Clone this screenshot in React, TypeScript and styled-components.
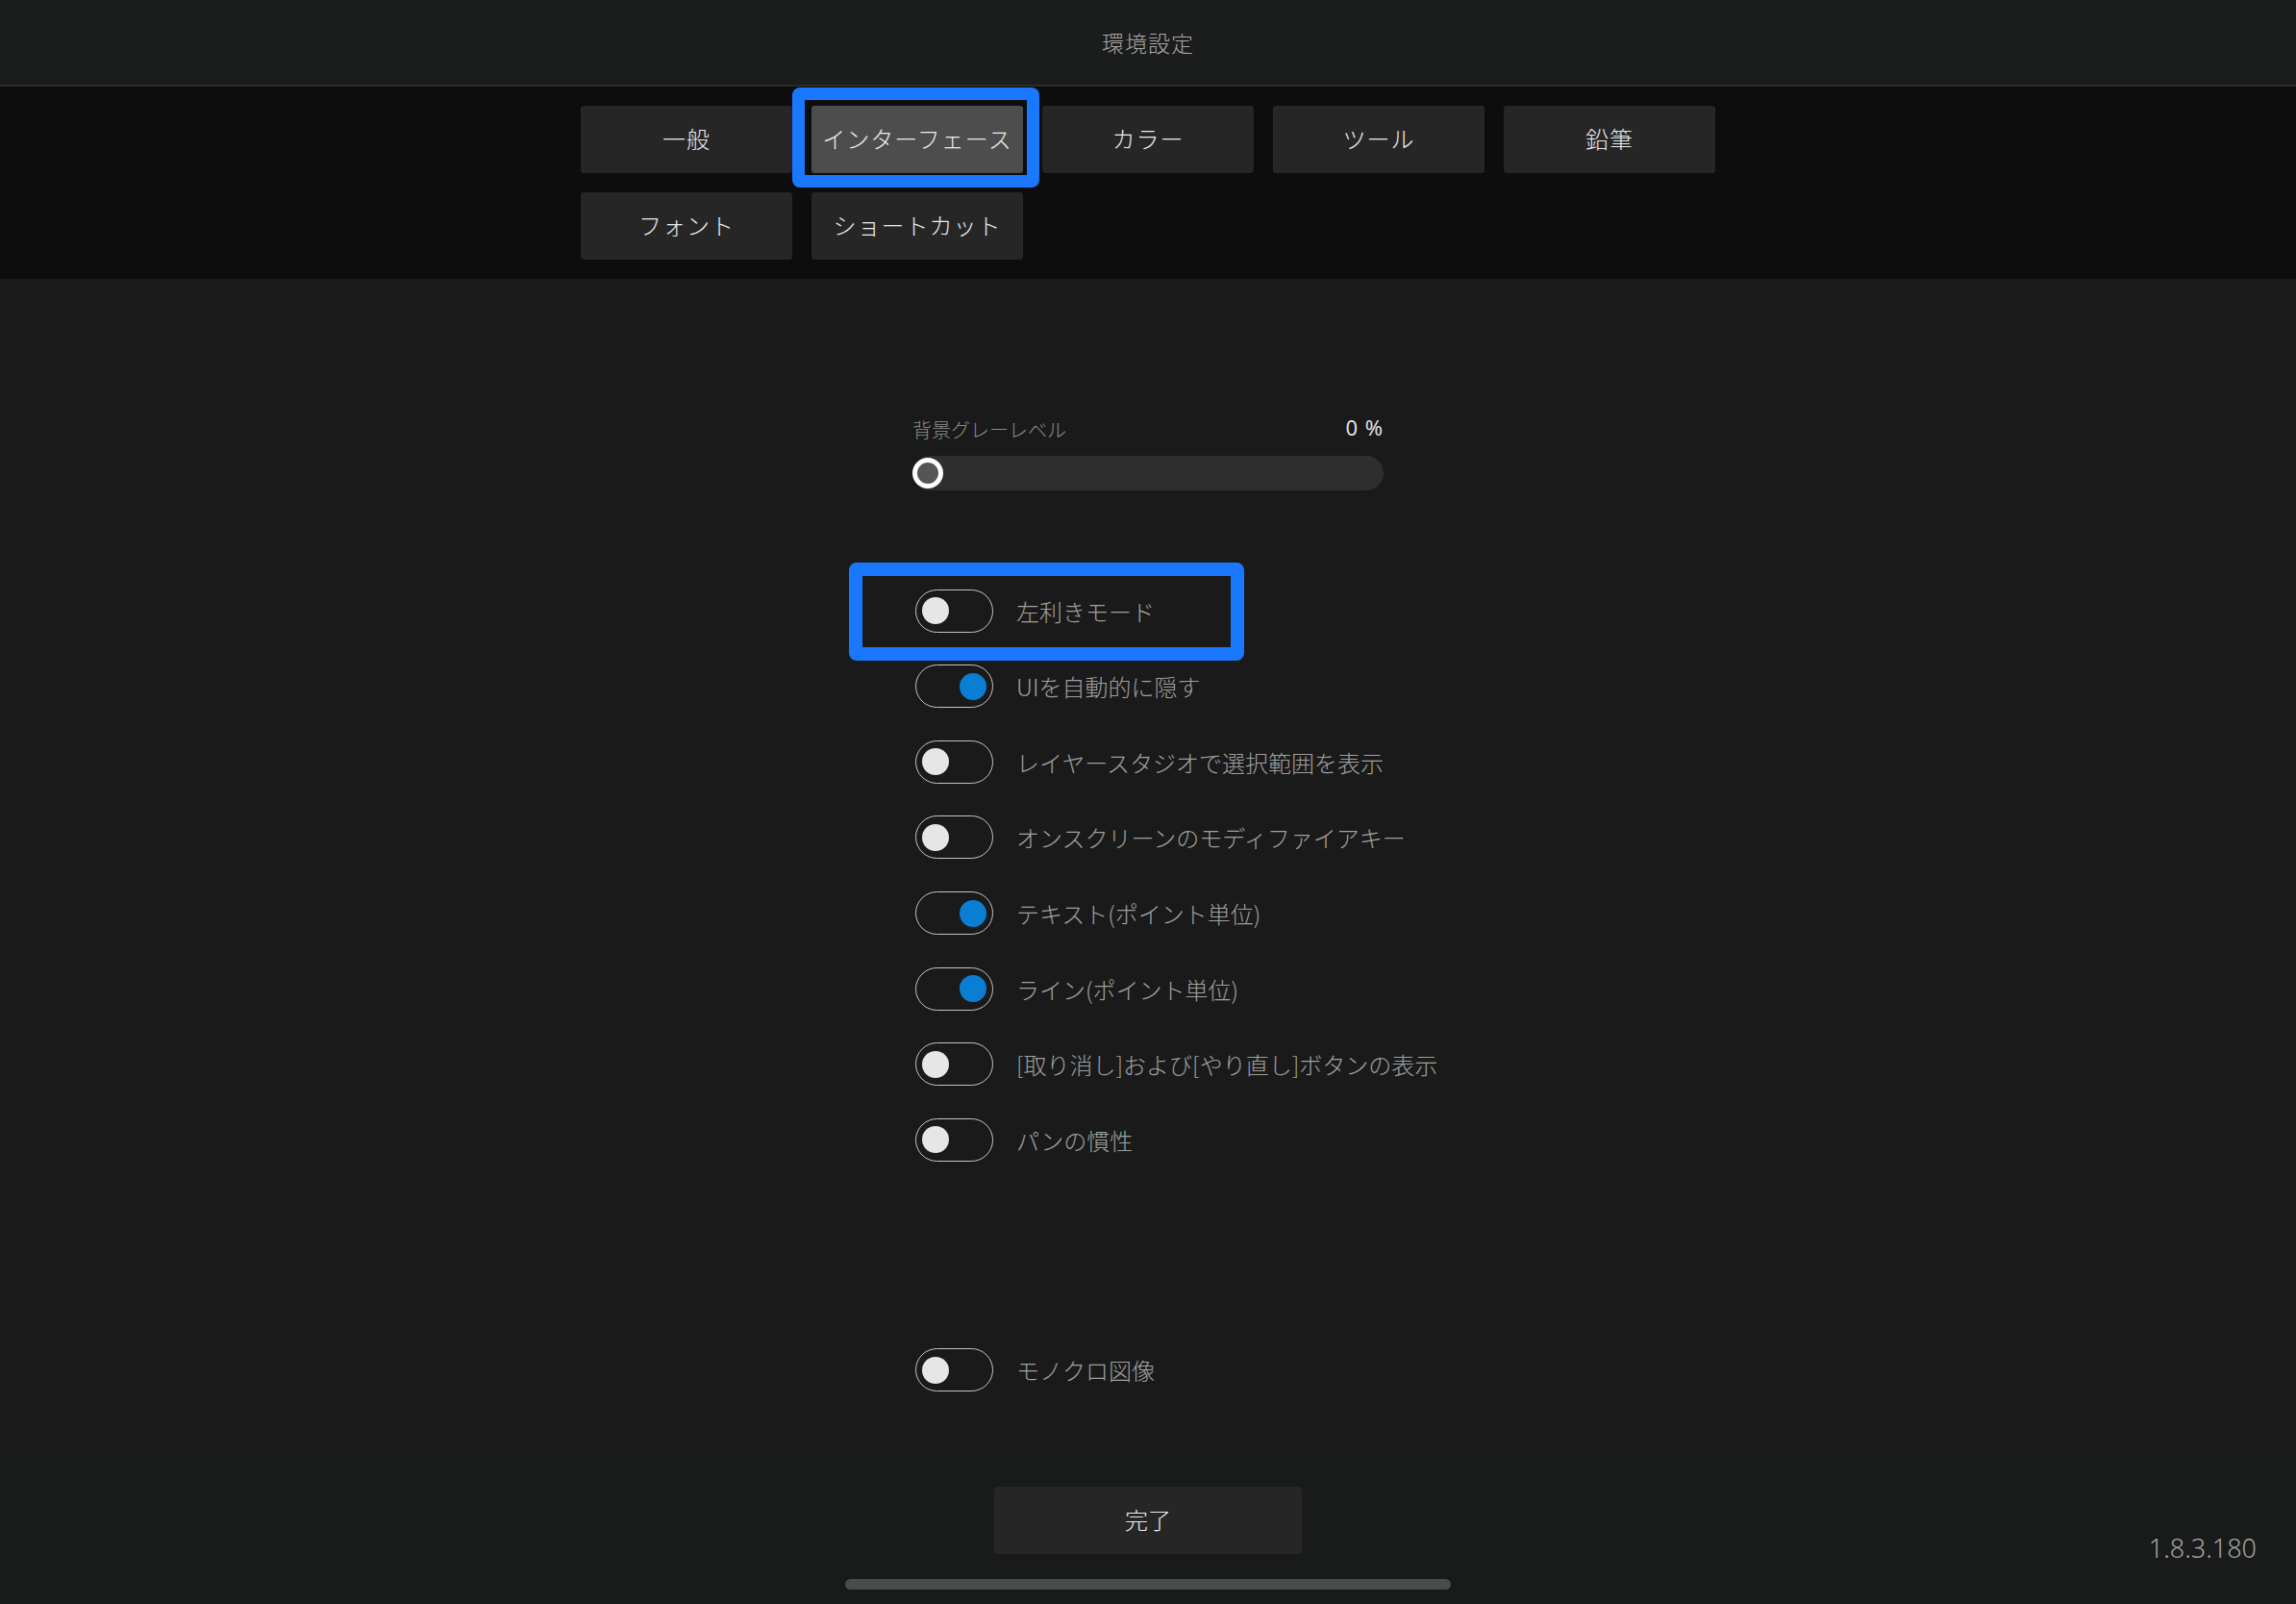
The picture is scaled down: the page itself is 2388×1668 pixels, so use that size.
import React from "react";
import styled, { createGlobalStyle } from "styled-components";

const GlobalStyle = createGlobalStyle`
  html, body {
    margin: 0;
    padding: 0;
    background: #1a1a1a;
  }
  body {
    width: 2388px;
    height: 1668px;
    overflow: hidden;
    font-family: "Noto Sans CJK JP", "Noto Sans", sans-serif;
  }
`;

const Page = styled.div`
  display: flex;
  flex-direction: column;
  width: 2388px;
  height: 1668px;
  background: #1a1a1a;
`;

const Header = styled.header`
  height: 88px;
  display: flex;
  align-items: center;
  justify-content: center;
  background: #1b1c1c;
  border-bottom: 2px solid #2c2d2d;
`;

const Title = styled.h1`
  margin: 0;
  font-size: 23px;
  font-weight: 300;
  line-height: 1;
  color: #a8a8a8;
  letter-spacing: 1px;
`;

const TabBar = styled.nav`
  background: #0d0d0d;
  padding: 20px 0;
`;

const TabGrid = styled.div`
  display: grid;
  grid-template-columns: repeat(5, 220px);
  grid-auto-rows: 70px;
  gap: 20px;
  width: 1180px;
  margin: 0 auto;
`;

const Tab = styled.div<{ $active?: boolean }>`
  position: relative;
  display: flex;
  align-items: center;
  justify-content: center;
  padding-bottom: 4px;
  box-sizing: border-box;
  border-radius: 3px;
  background: ${(p) => (p.$active ? "#4d4d4d" : "#262626")};
  color: #ececec;
  font-size: 24px;
  font-weight: 300;
  letter-spacing: 1px;
`;

// blue annotation frame drawn over a selected item
const TabMark = styled.div`
  position: absolute;
  top: -19px;
  left: -20px;
  right: -17px;
  bottom: -15px;
  border: 13px solid #1a78ff;
  border-radius: 8px;
  pointer-events: none;
`;

const Main = styled.main`
  flex: 1;
  padding-top: 145px;
`;

const Column = styled.div`
  width: 490px;
  margin: 0 auto;
`;

const SliderHead = styled.div`
  display: flex;
  justify-content: space-between;
  align-items: flex-start;
  height: 24px;
`;

const SliderLabel = styled.span`
  font-size: 20px;
  font-weight: 300;
  line-height: 24px;
  color: #8c8c8c;
`;

const SliderValue = styled.span`
  font-family: "Noto Sans", sans-serif;
  font-size: 22px;
  line-height: 18px;
  color: #e2e2e2;
  letter-spacing: 1px;
`;

const Track = styled.div`
  display: flex;
  align-items: center;
  height: 36px;
  margin-top: 15px;
  border-radius: 18px;
  background: #2e2e2e;
`;

const Thumb = styled.div`
  box-sizing: border-box;
  width: 32px;
  height: 32px;
  border-radius: 50%;
  border: 5px solid #ffffff;
  background: #555555;
`;

const ToggleList = styled.div`
  display: flex;
  flex-direction: column;
  margin-top: 86px;
`;

const Row = styled.div<{ $gap?: number }>`
  position: relative;
  display: flex;
  align-items: center;
  height: 78.57px;
  margin-top: ${(p) => p.$gap ?? 0}px;
`;

const RowMark = styled.div`
  position: absolute;
  left: -66px;
  top: -11px;
  width: 411px;
  height: 102px;
  box-sizing: border-box;
  border: 14px solid #1a78ff;
  border-radius: 8px;
  pointer-events: none;
`;

const Switch = styled.div<{ $on?: boolean }>`
  box-sizing: border-box;
  flex-shrink: 0;
  display: flex;
  align-items: center;
  justify-content: ${(p) => (p.$on ? "flex-end" : "flex-start")};
  width: 81px;
  height: 45px;
  margin-left: 3px;
  padding: 0 6px;
  border: 1.5px solid #c4c4c4;
  border-radius: 23px;
`;

const Knob = styled.div<{ $on?: boolean }>`
  flex-shrink: 0;
  width: 28px;
  height: 28px;
  border-radius: 50%;
  background: ${(p) => (p.$on ? "#0a7ed2" : "#e6e6e6")};
`;

const Label = styled.span`
  margin-left: 24px;
  font-size: 24px;
  font-weight: 300;
  color: #a0a0a0;
  white-space: nowrap;
`;

const Bottom = styled.footer`
  display: grid;
  grid-template-columns: 1fr 630px 1fr;
  grid-template-rows: 70px 11px;
  row-gap: 26px;
  height: 168px;
  box-sizing: border-box;
  padding-top: 46px;
  background: #191a1a;
`;

const DoneButton = styled.button`
  grid-column: 2;
  grid-row: 1;
  justify-self: center;
  width: 320px;
  height: 70px;
  padding: 0 0 4px;
  border: none;
  border-radius: 4px;
  background: #262626;
  color: #ededed;
  font-family: "Noto Sans CJK JP", sans-serif;
  font-size: 24px;
  font-weight: 300;
`;

const HomeBar = styled.div`
  grid-column: 2;
  grid-row: 2;
  border-radius: 6px;
  background: #4a4c4b;
`;

const Version = styled.div`
  grid-column: 3;
  grid-row: 1 / span 2;
  justify-self: end;
  align-self: start;
  margin-top: 47px;
  margin-right: 41px;
  font-family: "Noto Sans", sans-serif;
  font-size: 27px;
  font-weight: 300;
  line-height: 34px;
  color: #a2a2a2;
`;

const tabs = [
  "一般",
  "インターフェース",
  "カラー",
  "ツール",
  "鉛筆",
  "フォント",
  "ショートカット",
];

const toggles: { label: string; on: boolean; marked?: boolean }[] = [
  { label: "左利きモード", on: false, marked: true },
  { label: "UIを自動的に隠す", on: true },
  { label: "レイヤースタジオで選択範囲を表示", on: false },
  { label: "オンスクリーンのモディファイアキー", on: false },
  { label: "テキスト(ポイント単位)", on: true },
  { label: "ライン(ポイント単位)", on: true },
  { label: "[取り消し]および[やり直し]ボタンの表示", on: false },
  { label: "パンの慣性", on: false },
];

const Toggle: React.FC<{ label: string; on: boolean; gap?: number; marked?: boolean }> = ({
  label,
  on,
  gap,
  marked,
}) => (
  <Row $gap={gap}>
    {marked && <RowMark />}
    <Switch $on={on}>
      <Knob $on={on} />
    </Switch>
    <Label>{label}</Label>
  </Row>
);

const App: React.FC = () => {
  return (
    <>
      <GlobalStyle />
      <Page>
        <Header>
          <Title>環境設定</Title>
        </Header>
        <TabBar>
          <TabGrid>
            {tabs.map((t, i) => (
              <Tab key={t} $active={i === 1}>
                {i === 1 && <TabMark />}
                {t}
              </Tab>
            ))}
          </TabGrid>
        </TabBar>
        <Main>
          <Column>
            <SliderHead>
              <SliderLabel>背景グレーレベル</SliderLabel>
              <SliderValue>0 %</SliderValue>
            </SliderHead>
            <Track>
              <Thumb />
            </Track>
            <ToggleList>
              {toggles.map((t) => (
                <Toggle key={t.label} label={t.label} on={t.on} marked={t.marked} />
              ))}
              <Toggle label="モノクロ図像" on={false} gap={161} />
            </ToggleList>
          </Column>
        </Main>
        <Bottom>
          <DoneButton>完了</DoneButton>
          <HomeBar />
          <Version>1.8.3.180</Version>
        </Bottom>
      </Page>
    </>
  );
};

export default App;
